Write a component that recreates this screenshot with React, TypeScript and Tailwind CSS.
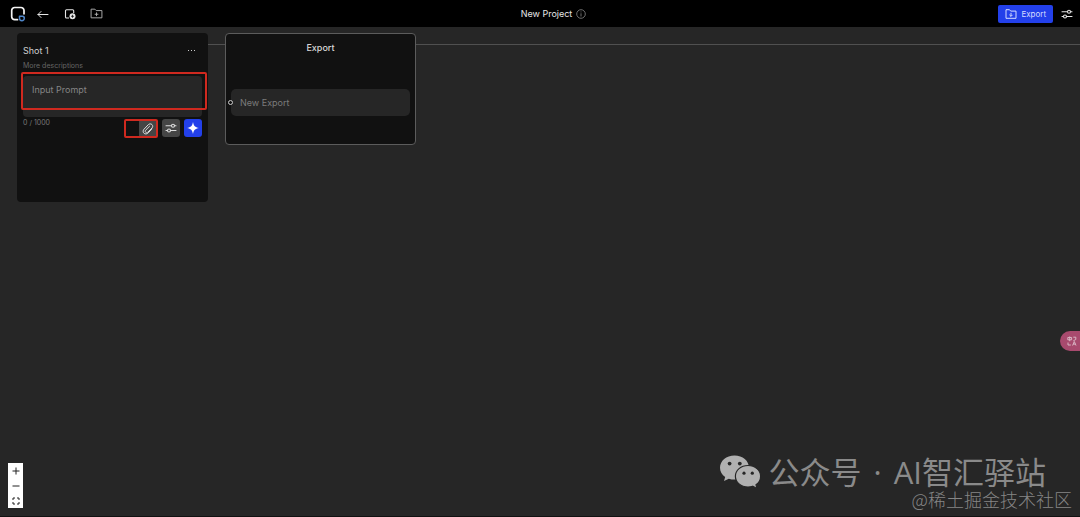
import React from 'react';

type IconProps = { className?: string };

function Logo() {
  return (
    <svg viewBox="0 0 16 16" className="size-4" fill="none" role="img" aria-label="Home">
      <path d="M7.500 13.700H4.700A3 3 0 0 1 1.700 10.700V4.500A3 3 0 0 1 4.700 1.500H11A3 3 0 0 1 14 4.500V7.800" stroke="#f4f4f4" strokeWidth="1.700" strokeLinecap="round" />
      <path d="M9.500 10.200H12.500A2 2 0 0 1 14.300 12.300A2.400 2.400 0 0 1 9.500 12.300Z" stroke="#4f86c9" strokeWidth="1.500" strokeLinejoin="round" />
    </svg>
  );
}

function BackArrow({ className }: IconProps) {
  return (
    <svg viewBox="0 0 12 10" className={className} fill="none" stroke="currentColor" strokeWidth="1" strokeLinecap="round" strokeLinejoin="round">
      <path d="M11 5.500H1M4 2.500L1 5.500L4 8.500" />
    </svg>
  );
}

function AddShot({ className }: IconProps) {
  return (
    <svg viewBox="0 0 12 12" className={className} fill="none" stroke="currentColor">
      <path d="M5 10H2.500A1 1 0 0 1 1.500 9V2.800A1 1 0 0 1 2.500 1.800H8.700A1 1 0 0 1 9.700 2.800V5" strokeWidth="1.100" />
      <circle cx="8.500" cy="8.300" r="3" fill="currentColor" stroke="none" />
      <path d="M8.500 6.800V9.800M7 8.300H10" stroke="#000" strokeWidth="0.700" />
    </svg>
  );
}

function FolderPlus({ className }: IconProps) {
  return (
    <svg viewBox="0 0 12 12" className={className} fill="none" stroke="currentColor" strokeWidth="0.900" strokeLinejoin="round">
      <path d="M1 2H4.500L5.700 3.300H11V10H1Z" />
      <path d="M6 5V8.400M4.300 6.700H7.700" />
    </svg>
  );
}

function FolderDown({ className }: IconProps) {
  return (
    <svg viewBox="0 0 12 12" className={className} fill="none" stroke="currentColor" strokeWidth="1" strokeLinejoin="round">
      <path d="M1 1.700H4.500L5.700 3.100H11V10.300H1Z" />
      <path d="M6 4.800V8.300M4.400 6.800L6 8.400L7.600 6.800" />
    </svg>
  );
}

function Sliders({ className }: IconProps) {
  return (
    <svg viewBox="0 0 12 10" className={className} fill="none" stroke="currentColor" strokeWidth="1.100" strokeLinecap="round">
      <path d="M1 2.700H6.300M9.700 2.700H11M1 7.500H2.300M5.700 7.500H11" />
      <circle cx="8" cy="2.700" r="1.500" />
      <circle cx="4" cy="7.500" r="1.500" />
    </svg>
  );
}

function Clip({ className }: IconProps) {
  return (
    <svg viewBox="0 0 12 12" className={className} fill="none" stroke="currentColor" strokeWidth="1" strokeLinecap="round" strokeLinejoin="round">
      <path d="M9.800 6L6.200 9.900C5 11.200 3 11.300 1.900 10.200C.8 9.100 .9 7.400 2.100 6.100L6.300 1.700C7.300 .7 9 .6 10 1.600C11 2.600 10.900 4 10 5L5.800 9.200C5.200 9.800 4.200 9.800 3.600 9.200C3 8.600 3.100 7.800 3.700 7.100L7.600 3.200" />
    </svg>
  );
}

function Spark({ className }: IconProps) {
  return (
    <svg viewBox="0 0 12 12" className={className} fill="currentColor">
      <path d="M6 0C6.700 3.900 8.100 5.300 12 6C8.100 6.700 6.700 8.100 6 12C5.300 8.100 3.900 6.700 0 6C3.900 5.300 5.300 3.900 6 0Z" />
    </svg>
  );
}

function WeChat() {
  return (
    <svg viewBox="0 0 42 36" className="h-9 w-[42px]" fill="#b0b0b0" aria-hidden="true">
      <path d="M15.500 1.500C7.300 1.500 1 6.900 1 13.700C1 17.500 3 20.800 6.200 23L5 27L9.800 24.700C11.600 25.300 13.500 25.600 15.500 25.600C23.700 25.600 30 20.400 30 13.700C30 6.900 23.700 1.500 15.500 1.500Z" />
      <path stroke="#262626" strokeWidth="1.200" d="M29 11.500C21.900 11.500 16.400 16.300 16.400 22.200C16.400 28.200 21.900 33 29 33C30.700 33 32.300 32.700 33.700 32.200L38 34.500L37 30.800C40 28.800 41.600 25.700 41.600 22.200C41.600 16.300 36.100 11.500 29 11.500Z" />
      <g fill="#262626">
        <circle cx="10.600" cy="9.600" r="1.900" />
        <circle cx="20.800" cy="9.600" r="1.900" />
        <circle cx="25" cy="19.200" r="1.600" />
        <circle cx="33.300" cy="19.200" r="1.600" />
      </g>
    </svg>
  );
}

function TopBar() {
  return (
    <header className="grid h-[27px] shrink-0 grid-cols-3 items-center bg-black pr-[7px] pl-[10px] text-[#e6e6e6]">
      <nav className="flex items-center gap-[11px]">
        <a href="#home"><Logo /></a>
        <button type="button" aria-label="Back"><BackArrow className="h-[10px] w-3" /></button>
        <div className="ml-1 flex items-center gap-[14px]">
          <button type="button" aria-label="Add shot"><AddShot className="size-3" /></button>
          <button type="button" aria-label="New folder" className="text-[#aaa]"><FolderPlus className="size-[13px]" /></button>
        </div>
      </nav>
      <h1 className="flex items-center justify-center gap-1 pl-6 text-[9px]">
        New Project
        <svg viewBox="0 0 10 10" className="size-[10px]" fill="none" stroke="#888" strokeWidth="0.800">
          <circle cx="5" cy="5" r="4.300" />
          <path d="M5 4.300V7.500M5 2.500V3.400" />
        </svg>
      </h1>
      <div className="flex items-center justify-end gap-2">
        <button type="button" className="flex h-[18px] items-center gap-1 rounded-xs bg-[#2340ea] px-[7px] text-[8px] text-[#d5dbff]">
          <FolderDown className="size-3" />
          Export
        </button>
        <button type="button" aria-label="Settings"><Sliders className="h-[10px] w-3" /></button>
      </div>
    </header>
  );
}

function ShotCard() {
  return (
    <section className="relative h-[169px] w-[191px] rounded-[4px] bg-[#111] px-[6px] pt-[10px]">
      <div className="flex h-4 items-center justify-between pr-[5px]">
        <h2 className="text-[9px] text-[#d0d0d0]">Shot 1</h2>
        <button type="button" aria-label="More options" className="flex gap-[2px] px-[2px] pt-[2px] pb-1">
          <span className="size-px bg-[#ccc]" />
          <span className="size-px bg-[#ccc]" />
          <span className="size-px bg-[#ccc]" />
        </button>
      </div>
      <label htmlFor="prompt" className="block h-[17px] pt-[2px] text-[7px] leading-[10px] text-[#666]">
        More descriptions
      </label>
      <textarea
        id="prompt"
        placeholder="Input Prompt"
        className="block h-[41px] w-full resize-none rounded-[4px] bg-[#262626] px-[9px] py-[7px] text-[9px] leading-[14px] text-white outline-none placeholder:text-[#858585]"
      />
      <div className="flex items-start justify-between pt-[2px]">
        <span className="text-[7px] leading-[8px] text-[#777]">0 / 1000</span>
        <div className="flex gap-1 text-[#ddd]">
          <div className="flex h-[19px] w-[34px] justify-end rounded-xs border-2 border-[#cf291f]">
            <button type="button" aria-label="Attach file" className="flex w-[17px] items-center justify-center bg-[#454545]">
              <Clip className="size-3" />
            </button>
          </div>
          <button type="button" aria-label="Shot settings" className="flex h-[18px] w-[18px] items-center justify-center rounded-[3px] bg-[#454545]">
            <Sliders className="h-[10px] w-3" />
          </button>
          <button type="button" aria-label="Generate" className="flex h-[18px] w-[18px] items-center justify-center rounded-[3px] bg-[#2340ea] text-white">
            <Spark className="size-3" />
          </button>
        </div>
      </div>
      <div className="pointer-events-none absolute top-[39px] right-px left-[4px] h-[38px] rounded-xs border-2 border-[#cf291f]" />
    </section>
  );
}

function ExportCard() {
  return (
    <section className="h-[112px] w-[191px] rounded-[4px] border border-[#5c5c5c] bg-[#111] px-[5px] pt-[6px]">
      <h2 className="text-center text-[9px] leading-[15px] font-medium text-[#d8d8d8]">Export</h2>
      <div className="relative mt-[34px]">
        <input
          type="text"
          aria-label="Export name"
          placeholder="New Export"
          className="block h-[27px] w-full rounded-[5px] bg-[#262626] px-[9px] text-[9px] text-white outline-none placeholder:text-[#7b7b7b]"
        />
        <span className="absolute top-[11px] -left-[3px] size-[5px] rounded-full border border-[#ccc] bg-[#111]" />
      </div>
    </section>
  );
}

function ZoomControls() {
  return (
    <div className="absolute bottom-2 left-2 flex w-[15px] flex-col bg-white text-[#222]">
      <button type="button" aria-label="Zoom in" className="flex h-[15px] items-center justify-center">
        <svg viewBox="0 0 8 8" className="size-2" stroke="currentColor" strokeWidth="1"><path d="M4 .5V7.500M.5 4H7.500" /></svg>
      </button>
      <button type="button" aria-label="Zoom out" className="flex h-[15px] items-center justify-center">
        <svg viewBox="0 0 8 8" className="size-2" stroke="currentColor" strokeWidth="1"><path d="M.5 4H7.500" /></svg>
      </button>
      <button type="button" aria-label="Fit view" className="flex h-[15px] items-center justify-center">
        <svg viewBox="0 0 8 8" className="size-2" fill="none" stroke="currentColor" strokeWidth="1">
          <path d="M1 3V1H3M5 1H7V3M7 5V7H5M3 7H1V5" />
        </svg>
      </button>
    </div>
  );
}

export default function App() {
  return (
    <div className="flex h-screen flex-col overflow-hidden bg-[#262626] font-['Inter',sans-serif]">
      <TopBar />
      <main className="relative flex-1 border-b border-[#111] px-[17px] pt-[6px]">
        <div className="absolute top-[17px] right-0 left-[17px] h-px bg-[#505050]" />
        <div className="relative flex items-start gap-[17px]">
          <ShotCard />
          <ExportCard />
        </div>
        <ZoomControls />
        <button type="button" aria-label="Translate" className="absolute top-[304px] right-0 flex h-5 w-5 items-center justify-center rounded-l-full bg-[#a84a6e] text-[#d9b5c4]">
          <svg viewBox="0 0 10 10" className="ml-1 size-[10px]" fill="none" stroke="currentColor" strokeWidth="1">
            <path d="M.8 1.500H4.600V3.800H.8ZM2.700 .5V5.200M6.300 1.200H8.800V3.500L6.300 4.800M1 6.500V9H3.800M5.600 9.500L7.300 5.500L9 9.500M6.200 8.100H8.400" />
          </svg>
        </button>
        <div className="pointer-events-none absolute right-2 bottom-[6px] flex flex-col items-end">
          <div className="mr-[26px] flex items-center gap-2 text-[#8a8a8a]">
            <WeChat />
            <p className="flex gap-3 font-['Open_Sans','Noto_Sans_CJK_SC',sans-serif] text-[31px] leading-8 whitespace-nowrap">
              <span>公众号</span>
              <span>·</span>
              <span>AI智汇驿站</span>
            </p>
          </div>
          <p className="-mt-[2px] font-['Noto_Sans_CJK_SC',sans-serif] text-[18px] leading-[22px] font-light text-[#858585]">@稀土掘金技术社区</p>
        </div>
      </main>
    </div>
  );
}
